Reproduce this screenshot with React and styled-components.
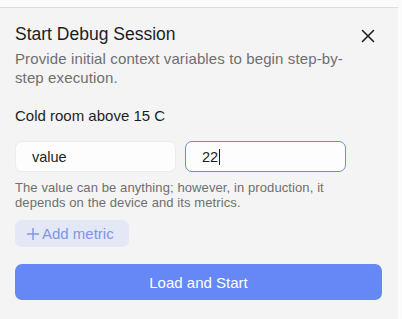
import React from "react";
import styled, { createGlobalStyle } from "styled-components";

const Global = createGlobalStyle`
  html, body { margin: 0; padding: 0; background: #fbfbfb; }
  body { font-family: "Liberation Sans", Arial, sans-serif; }
  * { box-sizing: border-box; }
`;

const Page = styled.div`
  width: 402px;
  height: 319px;
  padding-top: 7px;
  padding-right: 4px;
  background: #fbfbfb;
`;

const Panel = styled.div`
  height: 312px;
  background: #f4f4f4;
  border-top: 1px solid #dcdcdc;
  padding: 15px 20px 0 15px;
  display: flex;
  flex-direction: column;
`;

const Header = styled.div`
  display: flex;
  align-items: flex-start;
  justify-content: space-between;
`;

const HeaderText = styled.div`
  width: 335px;
`;

const Title = styled.h2`
  margin: 0;
  font-size: 17.5px;
  font-weight: 400;
  color: #1e1e1e;
  line-height: 22px;
`;

const Subtitle = styled.p`
  margin: 4px 0 0;
  font-size: 15px;
  letter-spacing: 0.12px;
  line-height: 19px;
  color: #6f6f6f;
`;

const CloseButton = styled.button`
  border: none;
  background: none;
  padding: 0;
  margin-top: 6px;
  margin-right: 3px;
  width: 14px;
  height: 14px;
  display: flex;
  color: #1e1e1e;
  cursor: pointer;
`;

const RuleName = styled.div`
  margin-top: 19px;
  font-size: 15px;
  color: #1e1e1e;
  line-height: 19px;
`;

const Fields = styled.div`
  margin-top: 16px;
  display: grid;
  grid-template-columns: 161px 161px;
  gap: 9px;
`;

const Field = styled.div`
  height: 31px;
  border-radius: 7px;
  background: #fdfdfd;
  border: 1px solid ${(p) => (p.$focused ? "#6c8bd8" : "#ececec")};
  padding: 0 16px;
  display: flex;
  align-items: center;
  font-size: 14.5px;
  color: #1e1e1e;
`;

const Caret = styled.span`
  display: inline-block;
  width: 1px;
  height: 16px;
  background: #1e1e1e;
  margin-left: 1px;
`;

const Help = styled.p`
  margin: 8px 0 0;
  max-width: 330px;
  font-size: 13px;
  letter-spacing: 0.1px;
  line-height: 15px;
  color: #6f6f6f;
`;

const AddButton = styled.button`
  margin-top: 10px;
  align-self: flex-start;
  height: 27px;
  width: 114px;
  border: none;
  border-radius: 7px;
  background: #e4e7f6;
  color: #7f96e4;
  font-family: inherit;
  font-size: 15px;
  display: flex;
  align-items: center;
  gap: 2px;
  padding: 0 0 0 11px;
`;

const Primary = styled.button`
  margin-top: 17px;
  height: 36px;
  width: 367px;
  border: none;
  border-radius: 7px;
  background: #6688f6;
  color: #ffffff;
  font-family: inherit;
  font-size: 15px;
`;

export default function App() {
  return (
    <>
      <Global />
      <Page>
        <Panel>
          <Header>
            <HeaderText>
              <Title>Start Debug Session</Title>
              <Subtitle>
                Provide initial context variables to begin step-by-step execution.
              </Subtitle>
            </HeaderText>
            <CloseButton aria-label="Close">
              <svg width="14" height="14" viewBox="0 0 14 14" fill="none" stroke="currentColor" strokeWidth="1.6" strokeLinecap="round">
                <path d="M1.5 1.5 L12.5 12.5 M12.5 1.5 L1.5 12.5" />
              </svg>
            </CloseButton>
          </Header>
          <RuleName>Cold room above 15 C</RuleName>
          <Fields>
            <Field>value</Field>
            <Field $focused>
              22<Caret />
            </Field>
          </Fields>
          <Help>
            The value can be anything; however, in production, it depends on the device and its metrics.
          </Help>
          <AddButton>
            <svg width="14" height="14" viewBox="0 0 14 14" stroke="currentColor" strokeWidth="1.4">
              <path d="M7 1 V13 M1 7 H13" />
            </svg>
            Add metric
          </AddButton>
          <Primary>Load and Start</Primary>
        </Panel>
      </Page>
    </>
  );
}
